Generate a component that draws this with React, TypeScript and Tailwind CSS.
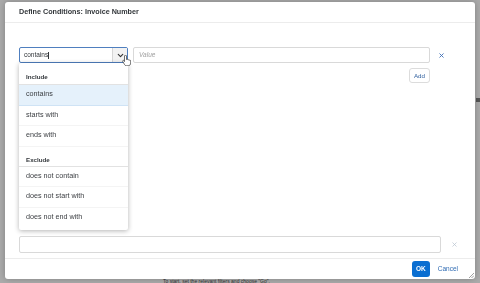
import { ChevronDown, X } from "lucide-react";

const includeOps = ["contains", "starts with", "ends with"];
const excludeOps = ["does not contain", "does not start with", "does not end with"];

function HandCursor() {
  return (
    <svg
      width="9"
      height="11"
      viewBox="0 0 18 22"
      className="absolute left-[117px] top-[53px]"
    >
      <path
        d="M5 2c0-1 1-1.6 2-1.6S9 1 9 2v7l1-.3c.8-.4 1.8 0 2 .6l1 .2c.8-.3 1.7.1 2 .8l.6.2c1-.2 1.8.5 1.8 1.5V16c0 3-2 5.5-5 5.5H9c-2 0-3-1-4-2.5L1.5 13c-.6-1 0-2 1-2.2.7-.1 1.3.3 1.8.8L5 13V2z"
        fill="#fff"
        stroke="#222"
        strokeWidth="1.3"
      />
    </svg>
  );
}

export default function App() {
  return (
    <div
      className="relative w-[480px] h-[283px] overflow-hidden bg-[#ababab] antialiased"
      style={{ fontFamily: '"Liberation Sans", Arial, sans-serif' }}
    >
      {/* page behind the dialog */}
      <div className="absolute left-[163px] top-[278px] text-[5px] text-[#333] whitespace-nowrap">
        To start, set the relevant filters and choose "Go".
      </div>
      <div className="absolute left-[476px] top-[98px] w-[4px] h-[4px] bg-[#555]" />

      {/* Dialog */}
      <div className="relative ml-[5px] mt-[2px] w-[470px] h-[277px] bg-white rounded-[3px] shadow-[0_0_6px_rgba(0,0,0,0.25)] flex flex-col will-change-transform">
        <div className="h-[21px] px-[14px] flex items-center border-b border-[#ececec]">
          <span className="text-[7.2px] font-bold text-[#32363a]">
            Define Conditions: Invoice Number
          </span>
        </div>

        <div className="flex-1 flex flex-col px-[14px] pt-[24px]">
          <div className="flex items-center">
            <div className="w-[109px] h-[16px] flex border border-[#4f7fbf] rounded-[2px] bg-white">
              <div className="flex-1 flex items-center pl-[4px] text-[6.5px] text-[#32363a]">
                contains<span className="w-px h-[7px] bg-[#32363a]" />
              </div>
              <div className="w-[15px] flex items-center justify-center bg-[#f2f2f2] border-l border-[#d5d5d5]">
                <ChevronDown className="w-[9px] h-[9px] text-[#333]" strokeWidth={3} />
              </div>
            </div>
            <div className="ml-[5px] w-[297px] h-[16px] flex items-center border border-[#d9d9d9] rounded-[2px] pl-[5px] text-[6.5px] italic text-[#a0a0a0]">
              Value
            </div>
            <X className="ml-[8px] w-[7px] h-[7px] text-[#3a6cb3]" strokeWidth={3} />
          </div>

          <div className="flex justify-end pr-[31px] mt-[5px]">
            <div className="h-[15px] px-[4px] flex items-center border border-[#dcdcdc] rounded-[3px] text-[6.2px] text-[#2f5f9e]">
              Add
            </div>
          </div>

          <div className="flex-1" />

          <div className="flex items-center mb-[5px]">
            <div className="w-[422px] h-[17px] border border-[#d9d9d9] rounded-[2px]" />
            <X className="ml-[10px] w-[7px] h-[7px] text-[#b9c4d0]" strokeWidth={2.5} />
          </div>
        </div>

        <div className="h-[21px] border-t border-[#ececec] flex items-center justify-end pr-[17px] gap-[8px]">
          <div className="h-[16px] px-[4px] flex items-center bg-[#0a6ed1] rounded-[3px] text-[6.5px] font-bold text-white">
            OK
          </div>
          <span className="text-[6.5px] text-[#2f6bb3]">Cancel</span>
        </div>

        <svg
          width="6"
          height="6"
          viewBox="0 0 6 6"
          className="absolute right-[1px] bottom-[1px]"
        >
          <path d="M6 1L1 6M6 3.5L3.5 6" stroke="#888" strokeWidth="0.8" />
        </svg>

        {/* dropdown list */}
        <div className="absolute left-[14px] top-[61px] w-[109px] bg-white rounded-[2px] shadow-[0_1px_5px_rgba(0,0,0,0.3)] py-[2px] text-[7.2px] text-[#3b3e42]">
          <div className="h-[20px] pt-[7px] pl-[7px] font-bold text-[6.2px] text-[#32363a] border-b border-[#e2e2e2]">
            Include
          </div>
          {includeOps.map((op, i) => (
            <div
              key={op}
              className={
                i === 0
                  ? "h-[20.5px] flex items-center pl-[7px] bg-[#e5f1fb] border-b border-[#cfe3f5]"
                  : "h-[20.5px] flex items-center pl-[7px] border-b border-[#f4f4f4]"
              }
            >
              {op}
            </div>
          ))}
          <div className="h-[20px] pt-[8px] pl-[7px] font-bold text-[6.2px] text-[#32363a] border-b border-[#e2e2e2]">
            Exclude
          </div>
          {excludeOps.map((op) => (
            <div
              key={op}
              className="h-[20.5px] flex items-center pl-[7px] border-b border-[#f4f4f4] last:border-b-0"
            >
              {op}
            </div>
          ))}
        </div>

        <HandCursor />
      </div>
    </div>
  );
}
